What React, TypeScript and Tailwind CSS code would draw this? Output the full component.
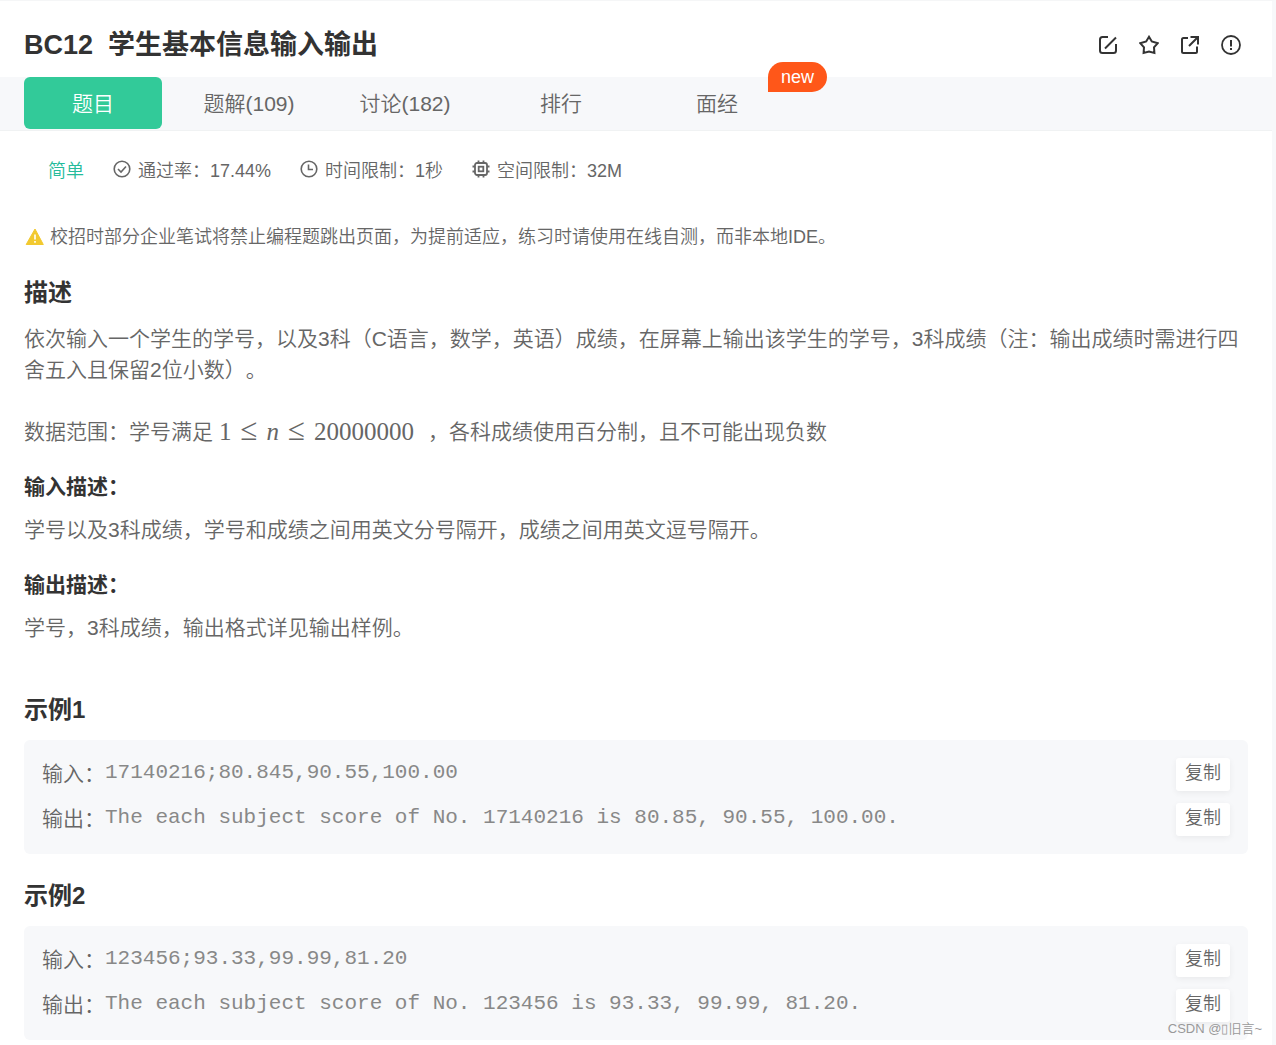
import React, { useState } from 'react';
import clsx from 'clsx';

interface Example {
  title: string;
  input: string;
  output: string;
}

const tabs = ['题目', '题解(109)', '讨论(182)', '排行', '面经'];

const examples: Example[] = [
  {
    title: '示例1',
    input: '17140216;80.845,90.55,100.00',
    output: 'The each subject score of No. 17140216 is 80.85, 90.55, 100.00.',
  },
  {
    title: '示例2',
    input: '123456;93.33,99.99,81.20',
    output: 'The each subject score of No. 123456 is 93.33, 99.99, 81.20.',
  },
];

function EditIcon() {
  return (
    <svg viewBox="0 0 20 20" className="w-5 h-5" fill="none" stroke="currentColor" strokeWidth="2">
      <path d="M10 2H4.5A2.5 2.5 0 0 0 2 4.5V15.5A2.5 2.5 0 0 0 4.5 18H15.5A2.5 2.5 0 0 0 18 15.5V9" />
      <path d="M7 13.5L18 2.5" />
    </svg>
  );
}

function StarIcon() {
  return (
    <svg viewBox="0 0 20 20" className="w-5 h-5" fill="none" stroke="currentColor" strokeWidth="2">
      <path d="M10 1.8L12.8 6.5L18.8 8.2L15 12.4L15.4 18L10 16.6L4.6 18L5 12.4L1.2 8.2L7.2 6.5Z" />
    </svg>
  );
}

function ShareIcon() {
  return (
    <svg viewBox="0 0 20 20" className="w-5 h-5" fill="none" stroke="currentColor" strokeWidth="2">
      <path d="M8 3H3.5Q2 3 2 4.5V16.5Q2 18 3.5 18H15.5Q17 18 17 16.5V11.5" />
      <path d="M10.5 2H18V9.5M18 2L9 11" />
    </svg>
  );
}

function ReportIcon() {
  return (
    <svg viewBox="0 0 20 20" className="w-5 h-5" fill="none" stroke="currentColor" strokeWidth="1.8">
      <circle cx="10" cy="10" r="9" />
      <path d="M10 5V11.5M10 13V15" strokeWidth="2" />
    </svg>
  );
}

function PassIcon() {
  return (
    <svg viewBox="0 0 18 18" className="w-[18px] h-[18px] mb-1" fill="none" stroke="currentColor" strokeWidth="1.6">
      <circle cx="9" cy="9" r="7.8" />
      <path d="M5 9L8 12L13 6.5" />
    </svg>
  );
}

function ClockIcon() {
  return (
    <svg viewBox="0 0 18 18" className="w-[18px] h-[18px] mb-1" fill="none" stroke="currentColor" strokeWidth="1.6">
      <circle cx="9" cy="9" r="7.8" />
      <path d="M8.5 4.5V9.5H13" />
    </svg>
  );
}

function ChipIcon() {
  return (
    <svg viewBox="0 0 18 18" className="w-[18px] h-[18px] mb-1" fill="none" stroke="currentColor" strokeWidth="1.8">
      <rect x="3" y="3" width="12" height="12" rx="2" />
      <rect x="6.7" y="6.7" width="4.6" height="4.6" />
      <path d="M6.5 0.5V3M11.5 0.5V3M6.5 15V17.5M11.5 15V17.5M0.5 6.5H3M0.5 11.5H3M15 6.5H17.5M15 11.5H17.5" />
    </svg>
  );
}

function WarningIcon() {
  return (
    <svg viewBox="0 0 20 18" className="w-5 h-[18px]">
      <path d="M11 1L19.3 16.5H2.2Z" fill="#f2c92f" stroke="#f2c92f" strokeWidth="1" strokeLinejoin="round" />
      <path d="M11 6.5V11.5M11 13V14.8" stroke="#fff" strokeWidth="1.6" />
    </svg>
  );
}

const actions = [
  { label: '编辑', icon: <EditIcon /> },
  { label: '收藏', icon: <StarIcon /> },
  { label: '分享', icon: <ShareIcon /> },
  { label: '反馈', icon: <ReportIcon /> },
];

function SampleRow({ label, value }: { label: string; value: string }) {
  const handleCopy = () => {
    navigator.clipboard?.writeText(value);
  };

  return (
    <div className="flex items-start justify-between">
      <div className="flex items-start">
        <span>{label}：</span>
        <code className="font-['Liberation_Mono',monospace] leading-[30px] text-[#888]">{value}</code>
      </div>
      <button
        onClick={handleCopy}
        className="w-[54px] h-[33px] pb-[2px] shrink-0 bg-white rounded-[3px] text-lg leading-[31px] shadow-[0_2px_6px_rgba(0,0,0,0.06)]"
      >
        复制
      </button>
    </div>
  );
}

export default function App() {
  const [activeTab, setActiveTab] = useState(0);

  return (
    <div className="relative min-h-screen bg-white border-t border-r-4 border-t-[#f5f6f7] border-r-[#f7f8fa] pb-[5px] font-['Liberation_Sans','Noto_Sans_CJK_SC',sans-serif] font-[350] text-[21px] leading-[31px] text-[#666] [text-spacing-trim:space-all]">
      {/* Title */}
      <header className="flex items-center justify-between h-[76px] pt-3 pl-6 pr-[31px] text-[#333]">
        <h1 className="flex gap-[15px] text-[27px] leading-9 font-bold">
          <span>BC12</span>
          <span>学生基本信息输入输出</span>
        </h1>
        <div className="flex gap-[21px]">
          {actions.map((action) => (
            <button key={action.label} aria-label={action.label}>
              {action.icon}
            </button>
          ))}
        </div>
      </header>

      {/* Tabs */}
      <nav className="flex gap-[18px] h-[54px] px-6 bg-[#f7f8fa] border-b border-[#f0f2f3]">
        {tabs.map((tab, index) => (
          <button
            key={tab}
            onClick={() => setActiveTab(index)}
            className={clsx(
              'relative w-[138px] h-[52px] rounded-md',
              index === activeTab && 'bg-[#32ca99] text-white'
            )}
          >
            {tab}
            {index === tabs.length - 1 && (
              <span className="absolute left-[120px] -top-[15px] w-[59px] h-[30px] rounded-full rounded-bl-none bg-[#ff5719] text-white text-lg leading-[30px]">
                new
              </span>
            )}
          </button>
        ))}
      </nav>

      <main className="px-6">
        {/* Limits */}
        <div className="flex items-center gap-[29px] pt-[22px] pl-6 text-lg leading-9">
          <span className="text-[#25bb9b]">简单</span>
          <span className="flex items-center gap-[7px]">
            <PassIcon />
            通过率：17.44%
          </span>
          <span className="flex items-center gap-[7px]">
            <ClockIcon />
            时间限制：1秒
          </span>
          <span className="flex items-center gap-[7px]">
            <ChipIcon />
            空间限制：32M
          </span>
        </div>

        <p className="flex items-center gap-[6px] mt-[30px] text-lg leading-9">
          <WarningIcon />
          校招时部分企业笔试将禁止编程题跳出页面，为提前适应，练习时请使用在线自测，而非本地IDE。
        </p>

        {/* Description */}
        <h2 className="mt-5 mb-3 text-2xl leading-9 font-bold text-[#333]">描述</h2>
        <p>
          依次输入一个学生的学号，以及3科（C语言，数学，英语）成绩，在屏幕上输出该学生的学号，3科成绩（注：输出成绩时需进行四舍五入且保留2位小数）。
        </p>
        <p className="flex items-center mt-[31px]">
          数据范围：学号满足
          <span className="flex items-baseline gap-[9px] mx-[6px] font-['Liberation_Serif',serif] text-[25px]">
            <span>1</span>
            <span className="text-[31px] leading-6">≤</span>
            <i>n</i>
            <span className="text-[31px] leading-6">≤</span>
            <span>20000000</span>
          </span>
          <span className="ml-2">，各科成绩使用百分制，且不可能出现负数</span>
        </p>

        <h3 className="mt-6 mb-3 font-bold text-[#333]">输入描述：</h3>
        <p>学号以及3科成绩，学号和成绩之间用英文分号隔开，成绩之间用英文逗号隔开。</p>
        <h3 className="mt-6 mb-3 font-bold text-[#333]">输出描述：</h3>
        <p className="mb-[49px]">学号，3科成绩，输出格式详见输出样例。</p>

        {/* Examples */}
        {examples.map((example) => (
          <section key={example.title} className="mb-6 last:mb-0">
            <h2 className="mb-3 text-2xl leading-9 font-bold text-[#333]">{example.title}</h2>
            <div className="flex flex-col gap-3 p-[18px] rounded-md bg-[#f7f8fa]">
              <SampleRow label="输入" value={example.input} />
              <SampleRow label="输出" value={example.output} />
            </div>
          </section>
        ))}
      </main>

      <div className="absolute right-[10px] bottom-[6px] text-[13px] leading-5 text-[#999]">CSDN @▯旧言~</div>
    </div>
  );
}
